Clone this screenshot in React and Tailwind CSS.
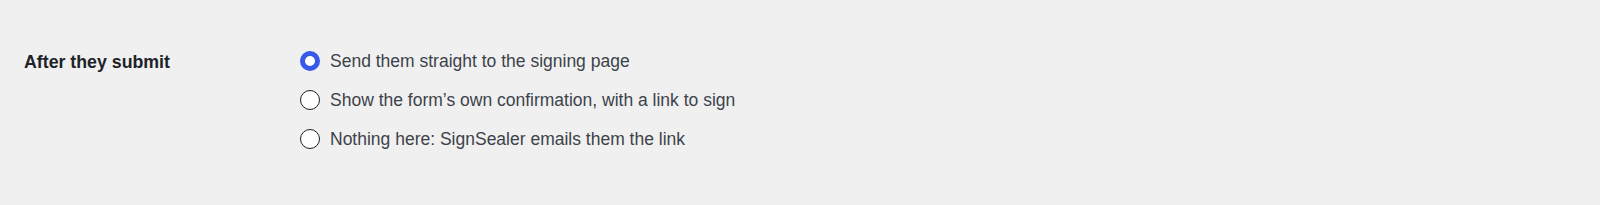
import React, { useState } from "react";

const options = [
  "Send them straight to the signing page",
  "Show the form\u2019s own confirmation, with a link to sign",
  "Nothing here: SignSealer emails them the link",
];

export default function App() {
  const [sel, setSel] = useState(0);
  return (
    <div className="min-h-[205px] w-full bg-[#f0f0f1] font-['Liberation_Sans',Arial,sans-serif]">
      <div className="flex pt-[51px] pl-[24px]">
        <div className="w-[276px] shrink-0 pt-[1px] text-[17.75px] font-bold leading-[20px] text-[#1d2327]">
          After they submit
        </div>
        <div className="flex flex-col gap-[19px]">
          {options.map((o, i) => (
            <label key={i} className="flex cursor-pointer items-center gap-[10px] leading-[20px]">
              <span
                onClick={() => setSel(i)}
                className={
                  i === sel
                    ? "box-border h-[20px] w-[20px] rounded-full border-[5px] border-[#3858e9] bg-white"
                    : "box-border h-[20px] w-[20px] rounded-full border border-[#1e1e1e] bg-white"
                }
              />
              <span className="text-[17.5px] text-[#3c434a]">{o}</span>
            </label>
          ))}
        </div>
      </div>
    </div>
  );
}
